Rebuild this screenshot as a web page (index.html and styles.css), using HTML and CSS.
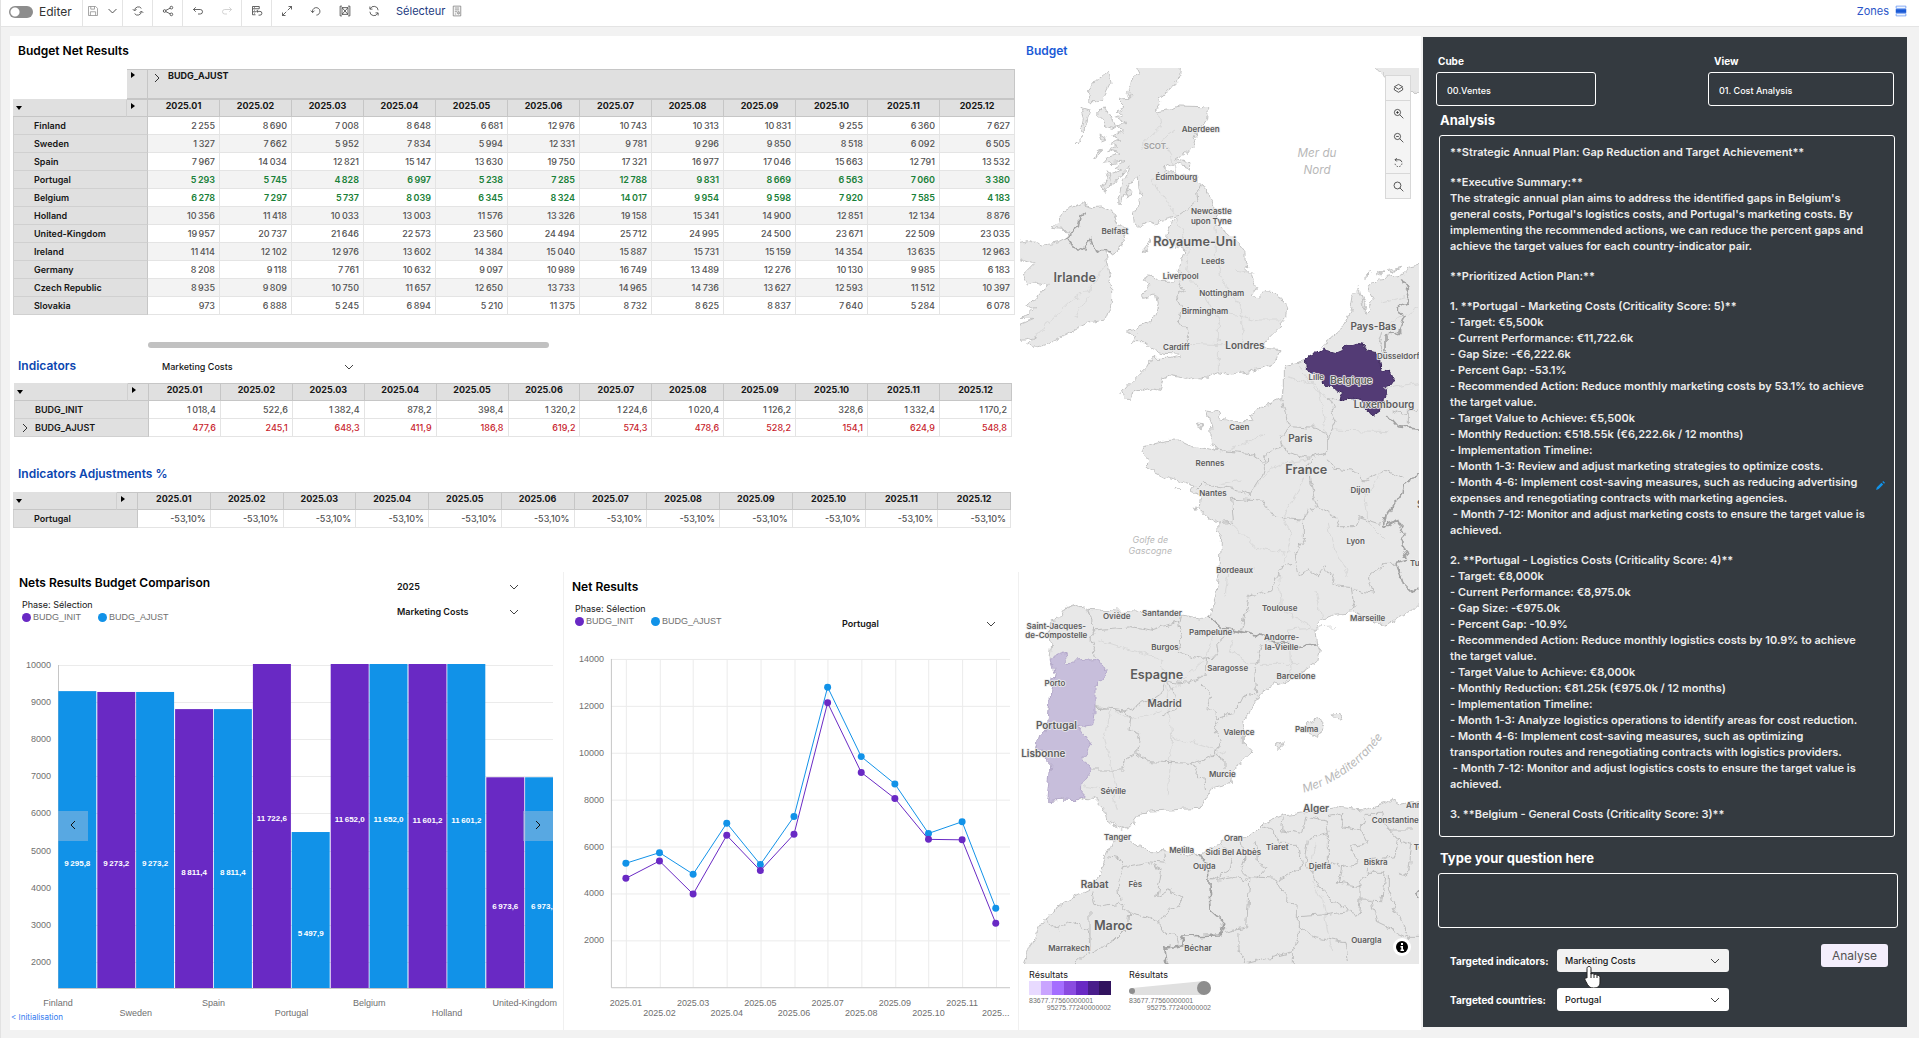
FILE: index.html
```html
<!DOCTYPE html>
<html lang="fr">
<head>
<meta charset="utf-8">
<title>Budget</title>
<meta name="viewport" content="width=device-width, initial-scale=1">
<link rel="stylesheet" href="styles.css">
</head>
<body>
<header class="toolbar">
  <label class="switch"><input type="checkbox" class="switch-box">Editer</label>
  <div class="tool-group">
    <button class="tool tool-narrow is-dim" aria-label="Enregistrer"><svg class="icon" viewBox="0 0 16 16"><path d="M2 2h9.500L14 4.500V14H2zM5 2v3.500h5V2M4.500 14V9h7v5"/></svg></button>
    <button class="tool tool-narrow" aria-label="Options d'enregistrement"><svg class="icon" viewBox="0 0 16 16"><path d="M1 4.500l7 7 7-7"/></svg></button>
  </div>
  <div class="tool-group"><button class="tool" aria-label="Synchroniser"><svg class="icon" viewBox="0 0 16 16"><path d="M3.500 7a5 5 0 0 1 9-2.500M12.500 9a5 5 0 0 1-9 2.500M1 5.500L3.500 8 6 5.500M10 10.500L12.500 8 15 10.500"/></svg></button></div>
  <div class="tool-group"><button class="tool" aria-label="Partager"><svg class="icon" viewBox="0 0 16 16"><circle cx="12.500" cy="3.500" r="1.800"/><circle cx="3.500" cy="8" r="1.800"/><circle cx="12.500" cy="12.500" r="1.800"/><path d="M5 7.200l6-3M5 8.800l6 3"/></svg></button></div>
  <div class="tool-group">
    <button class="tool" aria-label="Annuler"><svg class="icon" viewBox="0 0 16 16"><path d="M5 3L2 6l3 3M2 6h9a3 3 0 0 1 0 6H8"/></svg></button>
    <button class="tool is-dim is-off" aria-label="Rétablir"><svg class="icon" viewBox="0 0 16 16"><path d="M11 3l3 3-3 3M14 6H5a3 3 0 0 0 0 6h3"/></svg></button>
  </div>
  <div class="tool-group"><button class="tool" aria-label="Réinitialiser les données"><svg class="icon" viewBox="0 0 16 16"><path d="M2 2h9v3H2zM2 5v4h5M2 9v4h4M4 3.500h1M4 7h1M4 11h1M9 6.500L7.500 8.500l2 1.500M8 8.500h4a2.500 2.500 0 0 1 0 5H10"/></svg></button></div>
  <div class="tool-group tool-group-last">
    <button class="tool" aria-label="Agrandir"><svg class="icon" viewBox="0 0 16 16"><path d="M9 7l5-5M10 2h4v4M7 9l-5 5M2 10v4h4"/></svg></button>
    <button class="tool" aria-label="Recharger"><svg class="icon" viewBox="0 0 16 16"><path d="M3.500 10a5 5 0 1 1 5 3.500M1 7.500L3.500 10 6 7.500"/></svg></button>
    <button class="tool" aria-label="Ajuster au cadre"><svg class="icon" viewBox="0 0 16 16"><path d="M4 1.500H1.500v13H4M12 1.500h2.500v13H12M4 3.500h8v9H4zM4 3.500l8 9M12 3.500l-8 9"/></svg></button>
    <button class="tool" aria-label="Actualiser"><svg class="icon" viewBox="0 0 16 16"><path d="M13.500 7A5.500 5.500 0 0 0 3 5M2.500 9A5.500 5.500 0 0 0 13 11M2.500 2v3.500H6M13.500 14v-3.500H10"/></svg></button>
  </div>
  <a class="selector" href="#">Sélecteur <svg class="icon" viewBox="0 0 16 16"><path d="M3 1.500h10v13H3zM5 4h6M5 6.500h6M5 9h3M9 9h2v3H9zM5 12h2"/></svg></a>
  <a class="zones" href="#">Zones <svg class="zones-icon" viewBox="0 0 16 16"><path d="M1.500 1.500h13v3h-13zM1.500 11.500h13v3h-13z" fill="none" stroke="#5a8df0"/><path d="M1 5.500h14v5H1z"/></svg></a>
</header>

<main class="workspace">
  <div class="tables-and-charts">
    <section class="panel panel-results">
      <div class="panel-head"><h2>Budget Net Results</h2></div>
      <table class="cube cube-results">
        <colgroup><col class="col-name"><col class="col-arrow"><col span="11"><col class="col-last"></colgroup>
        <thead>
          <tr class="row-version"><td class="blank"></td><td class="mark"><i class="tri-right"></i></td>
            <th colspan="12" class="version"><svg class="expand" viewBox="0 0 8 8"><path d="M2 0l4 4-4 4"/></svg>BUDG_AJUST</th></tr>
          <tr class="months"><td class="mark"><i class="tri-down"></i></td><td class="mark"><i class="tri-right"></i></td></tr>
        </thead>
        <tbody id="results"></tbody>
      </table>
      <div class="scroll-thumb"></div>
    </section>

    <section class="panel panel-indicators">
      <div class="panel-head"><h2 class="blue">Indicators</h2>
        <select class="pick" aria-label="Indicateur"><option>Marketing Costs</option></select></div>
      <table class="cube">
        <colgroup><col class="col-name"><col class="col-arrow"><col span="12"></colgroup>
        <thead><tr class="months"><td class="mark"><i class="tri-down"></i></td><td class="mark"><i class="tri-right"></i></td></tr></thead>
        <tbody id="indicators"></tbody>
      </table>
    </section>

    <section class="panel panel-adjust">
      <div class="panel-head"><h2 class="blue">Indicators Adjustments %</h2></div>
      <table class="cube">
        <colgroup><col class="col-short"><col class="col-arrow"><col span="12"></colgroup>
        <thead><tr class="months"><td class="mark"><i class="tri-down"></i></td><td class="mark"><i class="tri-right"></i></td></tr></thead>
        <tbody id="adjustments"></tbody>
      </table>
    </section>

    <div class="charts">
      <section class="chart">
        <div class="chart-head">
          <div>
            <h2>Nets Results Budget Comparison</h2>
            <p class="phase">Phase: Sélection</p>
            <ul class="legend"><li class="init">BUDG_INIT</li><li class="ajust">BUDG_AJUST</li></ul>
          </div>
          <div class="chart-picks">
            <select class="pick strong" aria-label="Année"><option>2025</option></select>
            <select class="pick strong" aria-label="Indicateur comparé"><option>Marketing Costs</option></select>
          </div>
        </div>
        <svg id="bars" class="plot" viewBox="0 0 553 390" role="img" aria-label="Nets Results Budget Comparison"></svg>
        <button class="pager pager-left" aria-label="Précédent"><svg viewBox="0 0 8 8"><path d="M6 0L2 4l4 4"/></svg></button>
        <button class="pager pager-right" aria-label="Suivant"><svg viewBox="0 0 8 8"><path d="M2 0l4 4-4 4"/></svg></button>
        <a class="reset" href="#">&lt; Initialisation</a>
      </section>
      <section class="chart chart-line">
        <div class="chart-head">
          <div>
            <h2>Net Results</h2>
            <p class="phase">Phase: Sélection</p>
            <ul class="legend"><li class="init">BUDG_INIT</li><li class="ajust">BUDG_AJUST</li></ul>
          </div>
          <div class="chart-picks"><select class="pick strong" aria-label="Pays"><option>Portugal</option></select></div>
        </div>
        <svg id="lines" class="plot" viewBox="0 0 455 390" role="img" aria-label="Net Results"></svg>
      </section>
    </div>
  </div>

  <section class="map-panel">
    <h2 class="link-blue">Budget</h2>
    <div class="map">
      <svg class="map-svg" viewBox="15 114 1197 2688" role="img" aria-label="Carte">
        <defs><filter id="coast" x="0" y="0" width="1" height="1"><feTurbulence type="fractalNoise" baseFrequency=".035" numOctaves="3" seed="4"/><feDisplacementMap in="SourceGraphic" scale="26" xChannelSelector="R" yChannelSelector="G"/></filter></defs>
        <g class="land" filter="url(#coast)">
          <path d="M0 0h1v1zM1300 2900h1v1z" opacity="0"/>
          <path d="M358 100L372 128 355 140 350 165 338 185 345 205 310 208 330 228 306 240 322 255 305 262 335 280 302 288 325 305 290 318 318 330 285 340 305 352 275 362 315 372 280 385 268 400 330 392 300 410 320 420 285 432 262 465 270 480 300 462 330 425 345 410 335 440 320 470 308 515 322 518 335 480 355 445 370 440 372 480 385 500 368 520 355 555 358 580 372 592 400 580 425 590 435 570 480 558 492 556 470 570 460 600 455 620 475 635 480 655 505 640 510 665 495 690 490 720 500 735 470 750 430 752 415 740 390 738 385 748 405 762 380 795 385 805 425 795 430 820 415 870 390 885 345 900 345 912 365 915 352 935 385 935 415 960 450 970 485 972 495 978 470 985 410 985 395 1010 370 1035 340 1065 318 1090 325 1108 350 1108 360 1085 400 1072 435 1078 445 1050 470 1040 520 1048 545 1040 580 1045 610 1025 650 1035 740 1018 780 1000 795 962 735 955 760 925 785 900 812 868 815 830 800 808 780 788 745 785 728 800 705 795 722 770 710 735 690 715 705 712 690 690 690 665 672 640 640 610 608 590 600 550 590 510 560 460 545 442 490 434 460 428 440 415 480 398 520 412 522 398 485 388 520 365 535 345 550 300 575 265 577 240 565 230 490 228 470 238 430 245 420 240 440 212 430 205 450 190 470 170 490 150 494 100Z"/>
          <path d="M0 640L40 632 85 650 100 640 130 635 150 625 165 600 110 595 130 570 150 545 200 520 235 530 265 528 290 540 300 580 330 600 335 625 320 650 290 668 270 670 275 700 290 770 290 820 270 870 215 880 150 915 90 945 50 952 35 940 62 920 10 930 0 890 60 865 15 865 60 840 35 828 70 800 100 765 70 755 40 765 25 735 60 700 0 680Z"/>
          <path d="M280 125L240 155 220 180 225 215 250 215 270 190 285 160ZM195 232L222 240 215 260 210 305 198 300 205 265ZM270 230L245 258 270 285 300 295 290 262ZM405 628L378 660 395 662ZM340 470L355 490 342 505 334 492ZM265 355L232 378 240 382ZM285 425L265 470 272 484 290 462ZM205 315L182 340ZM255 312L275 325 262 330ZM1050 735L1070 728 1050 745ZM1085 730L1110 725 1088 738ZM1120 722L1160 712 1125 730ZM1042 800L1056 825 1044 830Z"/>
          <path d="M1065 100H1230V190H1190L1165 160 1110 145Z"/>
          <path d="M1230 700L1180 712 1165 735 1090 745 1060 770 1078 800 1055 850 1045 835 1030 770 1015 790 1005 850 980 895 950 920 930 945 925 960 870 990 850 1000 805 1010 805 1070 800 1105 740 1130 705 1155 715 1175 650 1175 615 1165 610 1145 572 1140 590 1185 592 1240 605 1260 570 1255 530 1250 488 1230 450 1232 385 1250 378 1272 405 1290 385 1310 415 1322 460 1345 500 1355 540 1370 530 1385 555 1395 550 1430 575 1460 615 1480 605 1490 620 1520 618 1560 615 1610 605 1680 590 1750 560 1765 500 1755 440 1750 340 1745 215 1738 185 1722 145 1738 135 1765 100 1775 100 1810 110 1840 105 1880 118 1930 108 1980 100 2070 75 2120 65 2150 95 2165 108 2200 105 2270 95 2315 150 2310 185 2312 205 2302 240 2305 265 2330 275 2370 320 2398 345 2390 380 2345 460 2340 555 2335 575 2300 595 2275 650 2260 655 2220 685 2190 712 2165 685 2140 685 2080 720 2020 735 1990 760 1970 830 1945 905 1895 915 1850 905 1840 900 1800 920 1765 960 1750 1020 1745 1060 1770 1115 1785 1140 1770 1180 1750 1230 1700Z"/>
          <path d="M870 2085L905 2065 930 2080 905 2122 875 2105ZM950 2052L975 2050 987 2070 965 2068ZM780 2148L805 2135 790 2160ZM545 1185L562 1187 555 1195ZM480 1372L492 1380ZM540 1430L546 1442Z"/>
          <path d="M20 2830L38 2770 75 2690 105 2650 160 2610 220 2580 255 2530 290 2440 320 2420 360 2440 400 2465 440 2465 500 2470 560 2475 610 2440 650 2420 700 2420 740 2380 800 2355 870 2345 960 2330 1040 2340 1110 2320 1130 2305 1160 2325 1230 2312V2830Z"/>
          <path class="belgium" d="M870 985L925 955 960 965 1000 948 1025 940 1050 945 1060 960 1080 965 1090 985 1095 1015 1120 1020 1137 1055 1115 1085 1105 1105 1100 1140 1075 1158 1060 1145 1040 1110 1000 1105 978 1112 982 1090 950 1075 920 1050 900 1035 875 1020Z"/>
          <path class="portugal" d="M105 1885L150 1870 155 1895 250 1888 258 1905 280 1922 262 1950 240 1970 240 2050 232 2085 190 2090 230 2145 205 2180 230 2220 205 2250 200 2300 185 2312 150 2310 95 2315 108 2200 90 2185 95 2165 65 2150 75 2120 100 2070 108 1980 118 1930Z"/>
          <path class="road" d="M480 300L440 330 470 380 480 430 410 450 480 550 520 660 515 730 560 780 610 870 610 1020M600 590L605 690 620 750 680 840 680 950 750 940M530 840L640 850 730 870 800 870M520 940L640 945M660 720L720 730M60 920L160 820 230 770 280 700M180 860L220 800M430 250L440 290 380 350M820 1040L910 1070 920 1120 935 1210M950 1200L1120 1205M880 1290L800 1300 760 1320 720 1380M620 1270L690 1240 750 1210M830 1290L870 1340 830 1410 800 1470 830 1510 810 1600M650 1480L720 1550 810 1570M620 1360L680 1350M720 1620L640 1620 630 1700M790 1630L800 1740 890 1790M900 1680L920 1760M940 1480L960 1560 1000 1640M1090 1340L1050 1400 1060 1480 1110 1530M1000 1380L1040 1370M250 1830L440 1890 460 2020 470 2120 570 2150 630 2170M440 2040L360 2070 280 2030M460 1990L560 1900 600 1810M470 2120L460 2300M210 2270L290 2280 310 2340M290 2030L270 2120 310 2300M890 2500L900 2440M890 2550L920 2610 950 2760M650 1830L640 1860 700 1900 850 1900M960 1790L820 1800 830 1950M1110 1080L1212 1060M1100 900L1212 830M850 1010L900 1080 960 1110M1090 820L1170 800"/>
          <path class="region" d="M560 465L545 490 550 510 520 535 490 556M490 755L505 790 485 800 500 830 490 870 520 910 520 945M800 1105L820 1190 795 1225 800 1250 755 1270 745 1300 705 1270 620 1262 600 1260M820 1190L900 1195 935 1210 935 1260 925 1275 880 1285 815 1270 800 1235M935 1240L960 1180 945 1150 955 1130 940 1100 975 1110M755 1290L740 1340 705 1395 650 1375 560 1360 545 1375M930 1290L960 1315 1010 1320 1050 1350 1110 1320 1165 1345M890 1290L880 1310 885 1350 905 1430 875 1440 865 1470 780 1465 740 1410 650 1405 655 1475 620 1480M865 1470L865 1530 840 1570 850 1630M840 1600L795 1620 770 1680 700 1700 690 1750 680 1800M850 1635L880 1620 910 1635 930 1610 965 1665 1015 1670 1020 1710 1010 1740M905 1430L960 1460 970 1490 1020 1490 1030 1460 1090 1480 1110 1475M1020 1680L1075 1690 1060 1640 1110 1600 1145 1600M220 1740L240 1800 225 1830 245 1880M235 1800L350 1790 410 1800 440 1790 490 1775 500 1830 490 1870 560 1885 610 1880 605 1840 650 1800M500 1750L495 1780M575 1885L570 1935 520 1960 450 1950 440 1990 410 2010 330 2040 240 2035M460 1950L490 2030 440 2060M740 1840L720 1930 725 1990M560 1960L590 2000 580 2030 610 2060 660 2050 690 1990 725 1995M230 2220L320 2220 330 2185 360 2165 400 2195 530 2200 545 2230 570 2250 575 2280M240 2030L330 2040 350 2070 345 2100 380 2120 375 2150 355 2165M530 2200L560 2190 600 2170 630 2190 630 2220M600 2170L620 2130 595 2100 610 2070M1130 1140L1160 1150 1212 1140M1180 1140V1180M1100 900L1090 940 1110 980"/>
          <path class="region" d="M280 2480L320 2490 330 2510 400 2495 450 2500 440 2460M400 2500L440 2520 425 2600 460 2580 500 2600 500 2630 460 2640 430 2680 400 2660 350 2650 310 2620 240 2630 230 2580M330 2510L310 2560 315 2610M90 2670L130 2700 160 2670 220 2700 225 2760 180 2802M225 2640L225 2770 300 2730 340 2690 345 2640M430 2680L450 2710 480 2712 490 2740M590 2550L650 2540 690 2555 705 2540 695 2690 625 2705M705 2540L785 2545 795 2580 850 2640 850 2720 835 2765 690 2802 672 2760V2710M835 2765V2802M850 2660L920 2655 1000 2645 1030 2655M850 2690L900 2720 990 2738 1000 2790M895 2540L920 2585 1000 2645M1030 2655L1035 2610 1100 2612 1110 2530 1060 2530 1035 2560V2610M1120 2535V2580L1180 2722H1230M1070 2612L1090 2680 1180 2722M620 2440L650 2480 640 2520 590 2550M680 2430L690 2480 680 2520 700 2540M720 2430L730 2490 750 2520 730 2545M740 2390L780 2400 790 2440 850 2440 860 2510 790 2550M805 2360L800 2400 860 2410 870 2360M880 2360L930 2370 940 2410 880 2430 870 2500 895 2540M940 2360L990 2350 980 2390 1040 2400 1050 2350 1100 2350 1120 2400 1190 2400M940 2410L940 2500 980 2510 970 2560 1035 2570M1040 2400L1060 2440 1010 2450 1030 2500 980 2510M1120 2400L1150 2430 1140 2480 1060 2490 1060 2530M1150 2430L1190 2440 1180 2540 1150 2530"/>
          <path class="frontier" d="M215 545L195 560 190 590 155 620 175 650 210 660 228 625 245 665 285 665M1165 745L1180 780 1175 820 1150 830 1150 845 1170 860 1150 910 1110 915 1110 970 1090 985M1120 1155L1150 1190 1230 1200M1230 1290L1195 1350 1165 1365 1160 1390 1110 1460 1105 1490 1150 1475 1170 1515 1155 1530 1180 1590 1145 1600 1165 1660 1190 1685 1230 1680M580 1758L620 1795 680 1805 740 1820 780 1835 850 1850 910 1840M550 2470L580 2510 585 2640 630 2680 615 2715 505 2718 500 2745 450 2752 458 2830M1230 2560L1205 2590 1230 2620"/>
        </g>
        <g class="sea"><text x="906" y="380">Mer du</text><text x="906" y="433">Nord</text></g>
        <g class="sea sea-small"><text x="406" y="1538">Golfe de</text><text x="406" y="1573">Gascogne</text></g>
        <path id="med" d="M866 2288Q1010 2250 1112 2110" fill="none"/>
        <text class="sea-arc"><textPath href="#med">Mer Méditerranée</textPath></text>
        <g id="towns" class="towns"></g>
      </svg>
      <div class="map-tools">
        <button aria-label="Couches"><svg class="icon" viewBox="0 0 16 16"><path d="M8 2l6 3.500L8 9 2 5.500zM2 7v3l6 3.500 6-3.500V7"/></svg></button>
        <button class="split" aria-label="Zoom avant"><svg class="icon" viewBox="0 0 16 16"><circle cx="6.500" cy="6.500" r="4.500"/><path d="M10 10l5 5M4.500 6.500h4M6.500 4.500v4"/></svg></button>
        <button aria-label="Zoom arrière"><svg class="icon" viewBox="0 0 16 16"><circle cx="6.500" cy="6.500" r="4.500"/><path d="M10 10l5 5M4.500 6.500h4"/></svg></button>
        <button aria-label="Réinitialiser la vue"><svg class="icon" viewBox="0 0 16 16"><path d="M3 5.500h6a4.500 4.500 0 0 1 4 3.500M5.500 3L3 5.500 5.500 8"/><path d="M13 11a5 5 0 0 1-10-1" stroke-dasharray="2 2"/></svg></button>
        <button class="split" aria-label="Rechercher"><svg class="icon" viewBox="0 0 16 16"><circle cx="6.500" cy="6.500" r="5"/><path d="M10 10l5 5"/></svg></button>
      </div>
      <button class="map-info" aria-label="Informations"><svg viewBox="0 0 12 12"><circle cx="6" cy="6" r="6"/><path d="M5 2h2v2H5zM4.500 5H7v3.500h1V10H4.500V8.500h.800V6.500h-.800z" fill="#fff"/></svg></button>
    </div>
    <div class="map-legends">
      <div class="scale"><h3>Résultats</h3>
        <div class="swatches"><i class="s1"></i><i class="s2"></i><i class="s3"></i><i class="s4"></i><i class="s5"></i><i class="s6"></i><i class="s7"></i></div>
        <p>83677.77560000001</p><p class="max">95275.77240000002</p></div>
      <div class="scale"><h3>Résultats</h3>
        <svg class="cone" viewBox="0 0 82 14"><path d="M3 7L75 0V14H3z" fill="#e0e0e0"/><circle cx="3" cy="10" r="3"/><circle cx="75" cy="7" r="7"/></svg>
        <p>83677.77560000001</p><p class="max">95275.77240000002</p></div>
    </div>
  </section>

  <aside class="assistant">
    <div class="fields">
      <div class="field field-cube"><label for="cube">Cube</label><input id="cube" type="text" value="00.Ventes"></div>
      <div class="field field-view"><label for="view">View</label><input id="view" type="text" value="01. Cost Analysis"></div>
    </div>
    <h2>Analysis</h2>
    <div class="answer">
      <p>**Strategic Annual Plan: Gap Reduction and Target Achievement**</p>
      <p>**Executive Summary:**<br>The strategic annual plan aims to address the identified gaps in Belgium's<br>general costs, Portugal's logistics costs, and Portugal's marketing costs. By<br>implementing the recommended actions, we can reduce the percent gaps and<br>achieve the target values for each country-indicator pair.</p>
      <p>**Prioritized Action Plan:**</p>
      <p>1. **Portugal - Marketing Costs (Criticality Score: 5)**<br>- Target: €5,500k<br>- Current Performance: €11,722.6k<br>- Gap Size: -€6,222.6k<br>- Percent Gap: -53.1%<br>- Recommended Action: Reduce monthly marketing costs by 53.1% to achieve<br>the target value.<br>- Target Value to Achieve: €5,500k<br>- Monthly Reduction: €518.55k (€6,222.6k / 12 months)<br>- Implementation Timeline:<br>- Month 1-3: Review and adjust marketing strategies to optimize costs.<br>- Month 4-6: Implement cost-saving measures, such as reducing advertising<br>expenses and renegotiating contracts with marketing agencies.<br>&nbsp;- Month 7-12: Monitor and adjust marketing costs to ensure the target value is<br>achieved.</p>
      <p>2. **Portugal - Logistics Costs (Criticality Score: 4)**<br>- Target: €8,000k<br>- Current Performance: €8,975.0k<br>- Gap Size: -€975.0k<br>- Percent Gap: -10.9%<br>- Recommended Action: Reduce monthly logistics costs by 10.9% to achieve<br>the target value.<br>- Target Value to Achieve: €8,000k<br>- Monthly Reduction: €81.25k (€975.0k / 12 months)<br>- Implementation Timeline:<br>- Month 1-3: Analyze logistics operations to identify areas for cost reduction.<br>- Month 4-6: Implement cost-saving measures, such as optimizing<br>transportation routes and renegotiating contracts with logistics providers.<br>&nbsp;- Month 7-12: Monitor and adjust logistics costs to ensure the target value is<br>achieved.</p>
      <p>3. **Belgium - General Costs (Criticality Score: 3)**</p>
      <svg class="pencil" viewBox="0 0 10 10"><path d="M0 10l1-3 5-5 2 2-5 5zM7 1l1-1 2 2-1 1z"/></svg>
    </div>
    <label class="question-label" for="question">Type your question here</label>
    <textarea id="question"></textarea>
    <div class="targets">
      <div class="target-list">
        <div class="target"><label for="indicators-target">Targeted indicators:</label>
          <select id="indicators-target" class="pick boxed hovered"><option>Marketing Costs</option></select>
          <svg class="hand" viewBox="0 0 18 24"><path d="M5 1.500c1.300 0 2 .800 2 2V9c1.500-.800 2.700-.300 3 .500 1.300-.600 2.500 0 2.800.800 1.500-.500 3.200.300 3.200 2V17c0 4-2 6-6.500 6-3 0-4.500-1-6-3.500L1 15c-.800-1.500.800-3 2-2V3.500c0-1.200.700-2 2-2z" fill="#fff" stroke="#222"/><path d="M7 8v5M10 9.500V13M13 10.500V13" stroke="#222"/></svg>
        </div>
        <div class="target"><label for="countries-target">Targeted countries:</label>
          <select id="countries-target" class="pick boxed"><option>Portugal</option></select></div>
      </div>
      <button class="analyse">Analyse</button>
    </div>
  </aside>
</main>
<script src="script.js"></script>
</body>
</html>
```
FILE: styles.css
```css
* { box-sizing: border-box; }
body {
  margin: 0;
  min-height: 100vh;
  display: flex;
  flex-direction: column;
  background: #f2f2f2;
  border-left: 1px solid #e2e2e2;
  color: #161616;
  font: 9px/12px Inter, "Noto Sans", sans-serif;
}
h2, h3, p, ul { margin: 0; padding: 0; }
h2 { font-size: 12px; line-height: 18px; font-weight: 600; color: #000; }
button, input, select, textarea { font: inherit; margin: 0; }
button { border: 0; padding: 0; background: none; }
a { text-decoration: none; }
.blue { color: #0a45b0; }
.link-blue { color: #1a5ad6; }
.icon { width: 12px; height: 12px; fill: none; stroke: #333; stroke-width: 1; display: block; }

/* Toolbar */
.toolbar {
  display: flex;
  align-items: stretch;
  height: 27px;
  margin-left: -1px;
  background: #fff;
  border-bottom: 1px solid #e4e4e4;
}
.switch { display: flex; align-items: center; width: 82px; padding: 0 0 3px 9px; gap: 6px; font-size: 12px; color: #333; }
.switch-box {
  appearance: none;
  width: 24px; height: 12px; margin: 0;
  border-radius: 6px;
  background: radial-gradient(circle at 6px 6px, #fff 4px, transparent 5px) #8d8d8d;
}
.tool-group { display: flex; border-left: 1px solid #e4e4e4; padding-bottom: 4px; }
.tool { width: 29px; display: flex; align-items: center; justify-content: center; }
.tool-narrow { width: 20px; }
.tool-narrow + .tool-narrow { width: 19px; }
.tool-narrow + .tool-narrow .icon { width: 9px; stroke: #333; stroke-width: 1.5; }
.is-dim .icon { stroke: #8a8a8a; }
.is-off .icon { stroke: #c4c4c4; }
.selector, .zones { display: flex; align-items: center; gap: 6px; padding-bottom: 4px; font-size: 11px; color: #1c3a80; }
.selector { margin-left: 8px; }
.selector .icon { stroke: #777; }
.zones { margin-left: auto; margin-right: 12px; color: #2a55c8; }
.zones-icon { width: 12px; height: 12px; fill: #1a5ad6; }

/* Page columns */
.workspace {
  flex: 1;
  display: grid;
  grid-template-columns: minmax(0, 1009fr) minmax(0, 402fr) minmax(0, 486fr);
  padding: 9px 12px 8px 9px;
}
.tables-and-charts { background: #fff; display: flex; flex-direction: column; }
.panel-results { padding: 0 4px 0 3px; }
.panel-indicators { padding: 0 7px 0 4px; }
.panel-adjust { padding: 0 8px 44px 3px; }
.panel-head { display: flex; align-items: flex-start; padding: 6px 0 9px 5px; }
.panel-indicators .panel-head { padding: 9px 0 8px 4px; }
.panel-indicators h2 { width: 144px; }
.panel-indicators .pick { width: 192px; margin-top: 2px; height: 16px; }
.panel-adjust .panel-head { padding-top: 28px; }

/* Data tables */
.cube { width: 100%; table-layout: fixed; border-collapse: separate; border-spacing: 0; }
.col-name { width: 114px; }
.col-short { width: 104px; }
.col-arrow { width: 21px; }
.col-last { width: 75px; }
.cube th, .cube td { height: 18px; padding: 0; overflow: hidden; white-space: nowrap; }
.cube thead th, .cube thead td {
  background: #e0e0e0;
  border-top: 1px solid #c6c6c6;
  border-right: 1px solid #c6c6c6;
  border-bottom: 1px solid #c6c6c6;
  font-weight: 700;
  line-height: 12px;
  vertical-align: top;
}
.cube thead .mark:first-child { border-right-color: #d0d0d0; border-top-color: #e0e0e0; }
.cube .row-version td, .cube .row-version th { height: 30px; }
.cube .row-version .blank { background: #fff; border-color: #fff; border-bottom: 0; }
.cube .version { text-align: left; }
.cube thead td { vertical-align: middle; }
.cube .row-version td { vertical-align: top; }
.cube tbody th {
  background: #e0e0e0;
  border: 1px solid #d0d0d0;
  border-width: 0 1px 1px;
  border-right-color: #c6c6c6;
  text-align: left;
  font-weight: 600;
  padding-left: 20px;
}
.cube tbody td { text-align: right; color: #525252; font-weight: 500; padding-right: 4px; border-right: 1px solid #e4e4e4; border-bottom: 1px solid #e4e4e4; }
.cube-results tbody tr:nth-child(even) td { background: #f3f3f3; }
.cube tbody .up td { color: #198038; font-weight: 600; }
.cube tbody .down td { color: #c81e2e; }
.expand { width: 8px; height: 8px; margin: 0 7px 0 5px; vertical-align: -3px; fill: none; stroke: #333; }
tbody .expand { margin: 0 6px 0 -14px; vertical-align: -1px; }
.tri-right, .tri-down { display: block; border: 3px solid transparent; width: 0; height: 0; }
.tri-right { border-left: 4px solid #000; margin: 0 0 4px 4px; }
.row-version .tri-right { margin-top: 2px; }
.tri-down { border-top: 4px solid #000; margin: 3px 0 0 3px; }
.scroll-thumb { height: 6px; width: 401px; max-width: 50%; margin: 27px 0 0 135px; border-radius: 3px; background: #c1c1c1; }

/* Drop-downs */
.pick {
  appearance: none;
  border: 0;
  border-radius: 0;
  height: 24px;
  padding: 0 20px 0 0;
  color: #161616;
  font-weight: 500;
  background: url("data:image/svg+xml,%3Csvg xmlns='http://www.w3.org/2000/svg' viewBox='0 0 8 8'%3E%3Cpath d='M0 2l4 4 4-4' fill='none' stroke='%23444'/%3E%3C/svg%3E") right 1px center / 8px 8px no-repeat;
}
.strong { font-weight: 600; }

/* Charts */
.charts { display: grid; grid-template-columns: minmax(0, 554fr) minmax(0, 455fr); flex: 1; }
.chart { position: relative; border-right: 1px solid #f0f0f0; }
.chart-head { display: flex; justify-content: space-between; height: 68px; padding: 2px 44px 0 9px; }
.chart-line .chart-head { padding: 6px 22px 0 8px; }
.phase { padding-left: 3px; margin-top: 7px; }
.legend { display: flex; gap: 17px; list-style: none; padding-left: 3px; font: 9px/12px "Liberation Sans", Arial, sans-serif; color: #6f6f6f; }
.legend li { display: flex; align-items: center; gap: 2px; }
.legend li::before { content: ""; width: 9px; height: 9px; border-radius: 50%; }
.init::before { background: #6929c4; }
.ajust::before { background: #1192e8; }
.chart-picks { display: flex; flex-direction: column; gap: 1px; width: 122px; padding-top: 1px; }
.chart-line .chart-picks { width: 154px; padding-top: 34px; }
.plot { display: block; width: 100%; height: auto; font: 9px "Liberation Sans", Arial, sans-serif; fill: #6f6f6f; }
.plot .grid { stroke: #ebebeb; }
.plot .axis { stroke: #c6c6c6; }
.plot .bar-init { fill: #6929c4; }
.plot .bar-ajust { fill: #1192e8; }
.plot .value { fill: #fff; font-size: 8px; font-weight: 700; }
.plot .line-init { fill: none; stroke: #6929c4; }
.plot .line-ajust { fill: none; stroke: #1192e8; }
.pager { position: absolute; top: 239px; width: 30px; height: 30px; background: rgba(160, 190, 220, .5); }
.pager svg { width: 8px; height: 8px; fill: none; stroke: #111; }
.pager-left { left: 48px; }
.pager-right { right: 10px; }
.reset { position: absolute; left: 1px; bottom: 7px; font-size: 8px; color: #2f7af0; }

/* Map */
.map-panel { background: #fff; padding: 6px 2px 0 1px; }
.map-panel h2 { padding-left: 6px; height: 26px; }
.map { position: relative; }
.map-svg { display: block; width: 100%; height: auto; }
.land { fill: #e8e8e8; stroke: #c2c2c2; stroke-width: 3px; stroke-linejoin: round; }
.land .belgium { fill: #523a75; stroke: #3d2a5c; }
.land .portugal { fill: #c7bedb; stroke: #b5aacb; }
.land .region { fill: none; stroke: #bdbdbd; }
.land .road { fill: none; stroke: #d8d8d8; }
.land .frontier { fill: none; stroke: #a2a2a2; stroke-width: 5px; }
.towns { text-anchor: middle; font-weight: 600; font-size: 24px; fill: #5c5c5c; stroke: #ececec; stroke-width: 5px; paint-order: stroke; stroke-linejoin: round; }
.towns .big { font-size: 38px; }
.towns .mid { font-size: 30px; }
.towns .area { fill: #a0a0a0; }
.sea { text-anchor: middle; font-style: italic; font-size: 35px; fill: #b8b8b8; }
.sea-small { font-size: 27px; }
.sea-arc { font-size: 35px; font-style: italic; fill: #b8b8b8; }
.map-tools { position: absolute; top: 7px; right: 8px; width: 26px; border: 1px solid #d8d8d8; background: #f4f4f4; }
.map-tools button { width: 24px; height: 24px; display: flex; align-items: center; justify-content: center; }
.map-tools .split { border-top: 1px solid #d8d8d8; height: 25px; }
.map-tools .icon { width: 11px; height: 11px; stroke: #161616; }
.map-info { position: absolute; right: 8px; bottom: 8px; width: 18px; height: 18px; padding: 3px; border-radius: 50%; background: #fff; }
.map-info svg { display: block; }
.map-legends { display: flex; gap: 18px; padding: 5px 0 0 9px; }
.scale { width: 82px; }
.scale h3 { font-size: 9px; line-height: 12px; font-weight: 400; }
.scale p { font: 7px/7px "Liberation Sans", Arial, sans-serif; color: #6f6f6f; }
.scale .max { text-align: right; }
.swatches { display: flex; height: 14px; margin-bottom: 2px; }
.swatches i { flex: 1; }
.s1 { background: #e8daff; }
.s2 { background: #c9a4ff; }
.s3 { background: #a56eff; }
.s4 { background: #8a4be0; }
.s5 { background: #6929c4; }
.s6 { background: #491d8b; }
.s7 { background: #31135e; }
.cone { display: block; width: 82px; height: 14px; margin-bottom: 2px; fill: #8d8d8d; }

/* Assistant */
.assistant {
  display: flex;
  flex-direction: column;
  margin: 1px 0 3px 2px;
  padding: 16px 9px 16px 13px;
  background: #343a40;
  color: #fff;
}
.fields { display: flex; justify-content: space-between; padding-right: 4px; }
.field label { display: block; font-size: 10px; font-weight: 700; line-height: 16px; margin-bottom: 3px; padding-left: 2px; }
.field-view label { padding-left: 6px; }
.field input, .assistant textarea, .answer { border: 1px solid #fff; border-radius: 3px; background: transparent; color: #fff; }
.field input { display: block; width: 100%; height: 34px; padding: 3px 10px 0; font-weight: 500; }
.field-cube { width: 160px; }
.field-view { width: 186px; }
.assistant h2, .question-label { color: #fff; font-size: 13px; line-height: 20px; font-weight: 700; padding-left: 4px; }
.assistant h2 { margin: 4px 0 5px; }
.answer { position: relative; flex: 1; margin: 0 3px; padding: 8px 10px; font-size: 11px; line-height: 16px; font-weight: 600; color: #ececec; white-space: nowrap; }
.answer p + p { margin-top: 14px; }
.pencil { position: absolute; right: 9px; top: 345px; width: 9px; height: 9px; fill: #1192e8; }
.question-label { margin: 11px 0 5px; }
.assistant textarea { display: block; height: 55px; margin-left: 2px; resize: none; }
.targets { display: flex; justify-content: space-between; align-items: flex-start; padding: 16px 10px 0 14px; }
.target-list { display: flex; flex-direction: column; gap: 16px; padding-top: 5px; }
.target { position: relative; display: flex; align-items: center; }
.target label { width: 107px; font-size: 10px; font-weight: 700; white-space: nowrap; }
.boxed { width: 172px; height: 23px; padding: 0 8px; border-radius: 3px; background-color: #fff; background-position: right 10px center; }
.hovered { background-color: #f2f2f2; }
.hand { position: absolute; left: 134px; top: 16px; width: 18px; height: 24px; fill: none; }
.analyse { width: 67px; height: 23px; border-radius: 3px; background: #f3eefc; color: #525252; font-size: 12px; }
```
FILE: script.js
```js
const months = Array.from({ length: 12 }, (_, i) => "2025." + String(i + 1).padStart(2, "0"));
const group = text => text.replace(/\B(?=(\d{3})+(?!\d))/g, "\u202f");
const whole = n => group(String(n));
const decimal = n => { const [a, b] = n.toFixed(1).split("."); return group(a) + "," + b; };

document.querySelectorAll(".months").forEach(row => {
  row.insertAdjacentHTML("beforeend", months.map(m => `<th scope="col">${m}</th>`).join(""));
});

const expand = '<svg class="expand" viewBox="0 0 8 8"><path d="M2 0l4 4-4 4"/></svg>';
function fill(id, rows) {
  document.getElementById(id).innerHTML = rows.map(r =>
    `<tr class="${r.tone || ""}"><th scope="row" colspan="2">${r.open ? expand : ""}${r.name}</th>` +
    r.cells.map(c => `<td>${c}</td>`).join("") + "</tr>").join("");
}

const results = {
  "Finland": [2255, 8690, 7008, 8648, 6681, 12976, 10743, 10313, 10831, 9255, 6360, 7627],
  "Sweden": [1327, 7662, 5952, 7834, 5994, 12331, 9781, 9296, 9850, 8518, 6092, 6505],
  "Spain": [7967, 14034, 12821, 15147, 13630, 19750, 17321, 16977, 17046, 15663, 12791, 13532],
  "Portugal": [5293, 5745, 4828, 6997, 5238, 7285, 12788, 9831, 8669, 6563, 7060, 3380],
  "Belgium": [6278, 7297, 5737, 8039, 6345, 8324, 14017, 9954, 9598, 7920, 7585, 4183],
  "Holland": [10356, 11418, 10033, 13003, 11576, 13326, 19158, 15341, 14900, 12851, 12134, 8876],
  "United-Kingdom": [19957, 20737, 21646, 22573, 23560, 24494, 25712, 24995, 24500, 23671, 22509, 23035],
  "Ireland": [11414, 12102, 12976, 13602, 14384, 15040, 15887, 15731, 15159, 14354, 13635, 12963],
  "Germany": [8208, 9118, 7761, 10632, 9097, 10989, 16749, 13489, 12276, 10130, 9985, 6183],
  "Czech Republic": [8935, 9809, 10750, 11657, 12650, 13733, 14965, 14736, 13627, 12593, 11512, 10397],
  "Slovakia": [973, 6888, 5245, 6894, 5210, 11375, 8732, 8625, 8837, 7640, 5284, 6078]
};
fill("results", Object.entries(results).map(([name, v]) => ({
  name, cells: v.map(whole), tone: name === "Portugal" || name === "Belgium" ? "up" : ""
})));
fill("indicators", [
  { name: "BUDG_INIT", cells: [1018.4, 522.6, 1382.4, 878.2, 398.4, 1320.2, 1224.6, 1020.4, 1126.2, 328.6, 1332.4, 1170.2].map(decimal) },
  { name: "BUDG_AJUST", open: true, tone: "down", cells: [477.6, 245.1, 648.3, 411.9, 186.8, 619.2, 574.3, 478.6, 528.2, 154.1, 624.9, 548.8].map(decimal) }
]);
fill("adjustments", [{ name: "Portugal", cells: months.map(() => "-53,10%") }]);

/* Bar chart */
const text = (x, y, s, anchor = "middle", cls = "") => `<text x="${x}" y="${y}" text-anchor="${anchor}" class="${cls}">${s}</text>`;
const yBar = v => 25 + (10000 - v) * 0.0371;
let bars = '<clipPath id="plot-area"><rect x="48" y="24" width="495" height="325"/></clipPath>';
for (let v = 2000; v <= 10000; v += 1000) {
  bars += `<path class="grid" d="M48 ${Math.round(yBar(v)) + 0.5}H543"/>` + text(41, Math.round(yBar(v)) + 3, v, "end");
}
bars += '<path class="axis" d="M48.500 25V348"/>';
const compared = [["Finland", 9295.8, 9295.8], ["Sweden", 9273.2, 9273.2], ["Spain", 8811.4, 8811.4], ["Portugal", 11722.6, 5497.9],
  ["Belgium", 11652, 11652], ["Holland", 11601.2, 11601.2], ["United-Kingdom", 6973.6, 6973.6]];
let columns = "";
compared.forEach(([name, init, ajust], i) => {
  const x = 9.500 + i * 77.800;
  [[init, "bar-init", x], [ajust, "bar-ajust", x + 38.800]].forEach(([v, cls, left]) => {
    if (left < 48) return;
    columns += `<rect class="${cls}" x="${left}" y="${yBar(v)}" width="38" height="${348 - yBar(v)}"/>` +
      text(left + 19, yBar(v / 2) + 2, decimal(v), "middle", "value");
  });
  bars += text(x + 38.500, i % 2 ? 376 : 366, name);
});
document.getElementById("bars").innerHTML = bars + `<g clip-path="url(#plot-area)">${columns}</g><path class="axis" d="M48 348.500H543"/>`;

/* Line chart */
const yLine = v => 348.400 - v * 0.02355;
const xLine = i => 62 + i * 33.700;
let lines = "";
for (let v = 2000; v <= 14000; v += 2000) {
  lines += `<path class="grid" d="M47 ${Math.round(yLine(v)) + 0.5}H447"/>` + text(40, Math.round(yLine(v)) + 3, v, "end");
}
months.forEach((m, i) => {
  lines += `<path class="grid" d="M${Math.round(xLine(i)) + 0.5} 19V348"/>` + text(xLine(i), i % 2 ? 377 : 367, i === 11 ? "2025..." : m);
});
lines += '<path class="axis" d="M47.500 19V348.500H447" fill="none"/>';
[["ajust", results.Portugal], ["init", [4650, 5390, 3980, 6480, 4980, 6530, 12120, 9160, 8050, 6310, 6290, 2740]]].forEach(([cls, data]) => {
  lines += `<polyline class="line-${cls}" points="${data.map((v, i) => xLine(i) + "," + yLine(v)).join(" ")}"/>` +
    data.map((v, i) => `<circle class="bar-${cls}" cx="${xLine(i)}" cy="${yLine(v)}" r="3.500"/>`).join("");
});
document.getElementById("lines").innerHTML = lines;

/* Place names: x, baseline, name, size class */
const towns = [
  [557, 306, "Aberdeen"], [423, 356, "SCOT.", "area"], [484, 451, "Édimbourg"], [589, 553, "Newcastle"], [589, 582, "upon Tyne"],
  [300, 611, "Belfast"], [539, 648, "Royaume-Uni", "big"], [594, 703, "Leeds"], [179, 755, "Irlande", "big"], [497, 748, "Liverpool"],
  [620, 798, "Nottingham"], [570, 851, "Birmingham"], [1075, 900, "Pays-Bas", "mid"], [484, 959, "Cardiff"], [690, 957, "Londres", "mid"],
  [1150, 987, "Düsseldorf"], [904, 1049, "Lille"], [1009, 1063, "Belgique", "mid"], [1107, 1134, "Luxembourg", "mid"],
  [673, 1201, "Caen"], [856, 1235, "Paris", "mid"], [585, 1309, "Rennes"], [874, 1333, "France", "big"], [594, 1398, "Nantes"],
  [1036, 1388, "Dijon"], [1022, 1541, "Lyon"], [1254, 1435, "Suisse", "mid"], [1215, 1607, "Turin"], [659, 1628, "Bordeaux"], [794, 1744, "Toulouse"],
  [305, 1766, "Oviède"], [441, 1757, "Santander"], [1058, 1773, "Marseille"], [124, 1796, "Saint-Jacques-"], [124, 1825, "de-Compostelle"],
  [587, 1816, "Pampelune"], [800, 1829, "Andorre-"], [800, 1859, "la-Vieille"], [450, 1859, "Burgos"], [638, 1922, "Saragosse"],
  [425, 1948, "Espagne", "big"], [843, 1946, "Barcelone"], [120, 1967, "Porto"], [449, 2032, "Madrid", "mid"], [124, 2097, "Portugal", "mid"],
  [672, 2115, "Valence"], [875, 2106, "Palma"], [85, 2181, "Lisbonne", "mid"], [622, 2242, "Murcie"], [295, 2293, "Séville"],
  [903, 2345, "Alger", "mid"], [1218, 2334, "Annaba"], [1141, 2379, "Constantine"], [308, 2429, "Tanger"], [655, 2433, "Oran"],
  [787, 2461, "Tiaret"], [500, 2468, "Melilla"], [655, 2475, "Sidi Bel Abbès"], [568, 2518, "Oujda"], [915, 2518, "Djelfa"],
  [1082, 2504, "Biskra"], [1245, 2460, "Tébessa"], [239, 2575, "Rabat", "mid"], [361, 2570, "Fès"], [295, 2700, "Maroc", "big"],
  [162, 2763, "Marrakech"], [549, 2763, "Béchar"], [1054, 2738, "Ouargla"]
];
document.getElementById("towns").innerHTML = towns.map(([x, y, name, cls]) => text(x, y, name, "middle", cls)).join("");
```
